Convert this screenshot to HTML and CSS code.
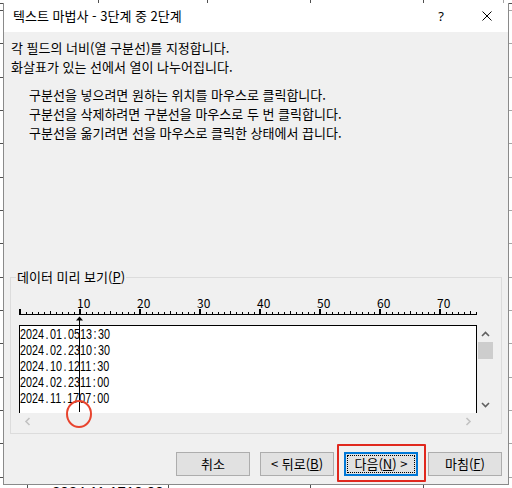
FILE: index.html
```html
<!DOCTYPE html>
<html lang="ko">
<head>
<meta charset="utf-8">
<title>텍스트 마법사</title>
<link rel="stylesheet" href="styles.css">
</head>
<body>
<div class="dialog">
  <div class="titlebar">
    <div class="title">텍스트 마법사 - 3단계 중 2단계</div>
    <div class="tb-btn help">?</div>
    <div class="tb-btn close">
      <svg width="10" height="10" viewBox="0 0 10 10"><path d="M0.5 0.5L9.5 9.5M9.5 0.5L0.5 9.5" stroke="#000" stroke-width="1" fill="none"/></svg>
    </div>
  </div>
  <div class="body">
    <div class="intro">
      <p>각 필드의 너비(열 구분선)를 지정합니다.</p>
      <p>화살표가 있는 선에서 열이 나누어집니다.</p>
    </div>
    <div class="hints">
      <p>구분선을 넣으려면 원하는 위치를 마우스로 클릭합니다.</p>
      <p>구분선을 삭제하려면 구분선을 마우스로 두 번 클릭합니다.</p>
      <p>구분선을 옮기려면 선을 마우스로 클릭한 상태에서 끕니다.</p>
    </div>
    <fieldset class="preview">
      <legend>데이터 미리 보기(<u>P</u>)</legend>
      <svg class="ruler" width="490" height="40" viewBox="11 285 490 40" shape-rendering="crispEdges">
        <defs>
          <pattern id="tk-s" patternUnits="userSpaceOnUse" x="20" y="312" width="6" height="2"><rect x="0" y="0" width="1" height="2"/></pattern>
          <pattern id="tk-m" patternUnits="userSpaceOnUse" x="20" y="311" width="30" height="3"><rect x="0" y="0" width="1" height="3"/></pattern>
          <pattern id="tk-l" patternUnits="userSpaceOnUse" x="19" y="309" width="60" height="5"><rect x="0" y="0" width="2" height="5"/></pattern>
        </defs>
        <text class="rn" x="77" y="308">10</text>
        <text class="rn" x="137" y="308">20</text>
        <text class="rn" x="197" y="308">30</text>
        <text class="rn" x="257" y="308">40</text>
        <text class="rn" x="317" y="308">50</text>
        <text class="rn" x="377" y="308">60</text>
        <text class="rn" x="437" y="308">70</text>
        <rect x="20" y="312" width="457" height="2" fill="url(#tk-s)"/>
        <rect x="20" y="311" width="457" height="3" fill="url(#tk-m)"/>
        <rect x="19" y="309" width="460" height="5" fill="url(#tk-l)"/>
        <rect x="19" y="314" width="458" height="1"/>
        <polygon points="79.5,316.5 76,320.5 83,320.5" shape-rendering="auto"/>
        <rect x="79" y="320" width="1" height="5"/>
      </svg>
      <div class="data-row">
        <div class="data-box">
          <div class="data-text">
            <div class="data-line">2024<span class="pc">.</span>01<span class="pc">.</span>0513<span class="pc">:</span>30</div>
            <div class="data-line">2024<span class="pc">.</span>02<span class="pc">.</span>2310<span class="pc">:</span>30</div>
            <div class="data-line">2024<span class="pc">.</span>10<span class="pc">.</span>1211<span class="pc">:</span>30</div>
            <div class="data-line">2024<span class="pc">.</span>02<span class="pc">.</span>2311<span class="pc">:</span>00</div>
            <div class="data-line">2024<span class="pc">.</span>11<span class="pc">.</span>1707<span class="pc">:</span>00</div>
          </div>
          <div class="break-line"></div>
        </div>
        <div class="vscroll">
          <div class="sb-btn"><svg width="17" height="17" viewBox="0 0 17 17"><polyline points="5,11 8.5,7.5 12,11" fill="none" stroke="#606060" stroke-width="1.6"/></svg></div>
          <div class="thumb"></div>
          <div class="sb-space"></div>
          <div class="sb-btn"><svg width="17" height="17" viewBox="0 0 17 17"><polyline points="5,7 8.5,10.5 12,7" fill="none" stroke="#606060" stroke-width="1.6"/></svg></div>
        </div>
      </div>
      <div class="hscroll">
        <div class="sb-btn"><svg width="17" height="17" viewBox="0 0 17 17"><polyline points="10.5,5 7,8.5 10.5,12" fill="none" stroke="#c2c2c2" stroke-width="1.6"/></svg></div>
        <div class="sb-space"></div>
        <div class="sb-btn"><svg width="17" height="17" viewBox="0 0 17 17"><polyline points="6.5,5 10,8.5 6.5,12" fill="none" stroke="#c2c2c2" stroke-width="1.6"/></svg></div>
      </div>
    </fieldset>
    <div class="buttons">
      <button class="btn">취소</button>
      <button class="btn">&lt; 뒤로(<u>B</u>)</button>
      <button class="btn primary">다음(<u>N</u>) &gt;</button>
      <button class="btn">마침(<u>F</u>)</button>
    </div>
  </div>
  <div class="mark-rect"></div>
  <div class="mark-circle"></div>
</div>
<div class="sheet-row">2024.11.1710:00</div>
</body>
</html>
```

FILE: styles.css
```css
html, body {
  margin: 0;
  padding: 0;
}

body {
  width: 512px;
  height: 488px;
  overflow: hidden;
  font-family: "Noto Sans CJK KR", "Noto Sans", sans-serif;
  color: #000;
  background:
    linear-gradient(#505050, #505050) 0 3px / 512px 1px no-repeat,
    repeating-linear-gradient(#505050 0 1px, transparent 1px 33.333px) 0 10px / 3px 480px no-repeat,
    repeating-linear-gradient(#a6a6a6 0 1px, transparent 1px 33.333px) 509px 10px / 3px 480px no-repeat,
    linear-gradient(#505050, #505050) 98px 0 / 1px 3px no-repeat,
    linear-gradient(#505050, #505050) 207px 0 / 1px 3px no-repeat,
    linear-gradient(#505050, #505050) 310px 0 / 1px 3px no-repeat,
    linear-gradient(#505050, #505050) 423px 0 / 1px 3px no-repeat,
    linear-gradient(#a6a6a6, #a6a6a6) 503px 0 / 1px 3px no-repeat,
    linear-gradient(#505050, #505050) 27px 485px / 1px 3px no-repeat,
    linear-gradient(#505050, #505050) 168px 485px / 1px 3px no-repeat,
    linear-gradient(#505050, #505050) 310px 485px / 1px 3px no-repeat,
    linear-gradient(#505050, #505050) 423px 485px / 1px 3px no-repeat,
    #fff;
}

.dialog {
  position: relative;
  box-sizing: border-box;
  width: 506px;
  height: 482px;
  margin: 3px 0 0 3px;
  background: #f0f0f0;
  border: 1px solid #8a8a8a;
  border-top: none;
  display: flex;
  flex-direction: column;
}

.titlebar {
  height: 29px;
  background: #fff;
  display: flex;
  align-items: flex-start;
  flex: none;
}

.title {
  flex: 1;
  padding-left: 9px;
  font-size: 13px;
  line-height: 26px;
  white-space: nowrap;
}

.tb-btn {
  height: 26px;
  display: flex;
  align-items: center;
  justify-content: center;
}

.help {
  width: 50px;
  font-family: "Noto Sans", sans-serif;
  font-size: 13px;
}

.close {
  width: 42px;
}

.close svg {
  display: block;
}

.body {
  flex: 1;
  display: flex;
  flex-direction: column;
  padding: 6px 0 8px;
  box-sizing: border-box;
}

.body p {
  margin: 0;
  font-size: 13px;
  line-height: 19px;
  white-space: nowrap;
}

.intro {
  padding-left: 7px;
}

.hints {
  margin-top: 9px;
  padding-left: 25px;
}

.preview {
  margin: auto 6px 0;
  padding: 0 0 3px;
  border: 1px solid #dcdcdc;
  min-width: 0;
}

.preview legend {
  margin-left: 5px;
  padding: 0 1px;
  font-size: 13px;
  line-height: 16px;
}

.ruler {
  display: block;
}

.rn {
  font-family: "Noto Sans CJK KR", "Noto Sans", sans-serif;
  font-size: 12px;
  fill: #000;
}

.data-row {
  display: flex;
  margin-left: 8px;
  height: 88px;
}

.data-box {
  position: relative;
  box-sizing: border-box;
  width: 458px;
  height: 88px;
  background: #fff;
  border: 1px solid #000;
  border-bottom: none;
  overflow: hidden;
}

.data-text {
  font-family: "Liberation Sans", sans-serif;
  font-size: 14px;
  line-height: 16px;
  transform: scaleX(0.7706);
  transform-origin: 0 0;
}

.data-line {
  height: 16px;
  white-space: nowrap;
}

.pc {
  display: inline-block;
  width: 7.786px;
  text-align: center;
}

.break-line {
  position: absolute;
  left: 59px;
  top: 0;
  width: 1px;
  height: 86px;
  background: #000;
}

.vscroll {
  width: 17px;
  display: flex;
  flex-direction: column;
}

.sb-btn {
  width: 17px;
  height: 17px;
  flex: none;
}

.sb-btn svg {
  display: block;
}

.thumb {
  height: 17px;
  margin: 0 1px;
  background: #cdcdcd;
  flex: none;
}

.sb-space {
  flex: 1;
}

.hscroll {
  display: flex;
  margin-left: 8px;
  width: 458px;
  height: 17px;
}

.buttons {
  display: flex;
  justify-content: flex-end;
  gap: 10px;
  margin-top: 18px;
  padding-right: 6px;
}

.btn {
  box-sizing: border-box;
  width: 74px;
  height: 24px;
  margin: 0;
  padding: 0;
  background: #e1e1e1;
  border: 1px solid #adadad;
  border-radius: 0;
  font-family: "Noto Sans CJK KR", "Noto Sans", sans-serif;
  font-size: 13px;
  line-height: 22px;
  color: #000;
}

.btn.primary {
  position: relative;
  border: 2px solid #0078d7;
  line-height: 20px;
}

.btn.primary::after {
  content: "";
  position: absolute;
  inset: 1px;
  border: 1px dotted #000;
}

.mark-rect {
  position: absolute;
  left: 333px;
  top: 441px;
  width: 89px;
  height: 38px;
  box-sizing: border-box;
  border: 2px solid #e0281e;
  border-radius: 1px;
}

.mark-circle {
  position: absolute;
  left: 62px;
  top: 397px;
  width: 26px;
  height: 28px;
  box-sizing: border-box;
  border: 2px solid #e8442e;
  border-radius: 50%;
}

.sheet-row {
  padding-left: 52px;
  font-family: "Liberation Sans", sans-serif;
  font-size: 15px;
  line-height: 13px;
  white-space: nowrap;
}
```
